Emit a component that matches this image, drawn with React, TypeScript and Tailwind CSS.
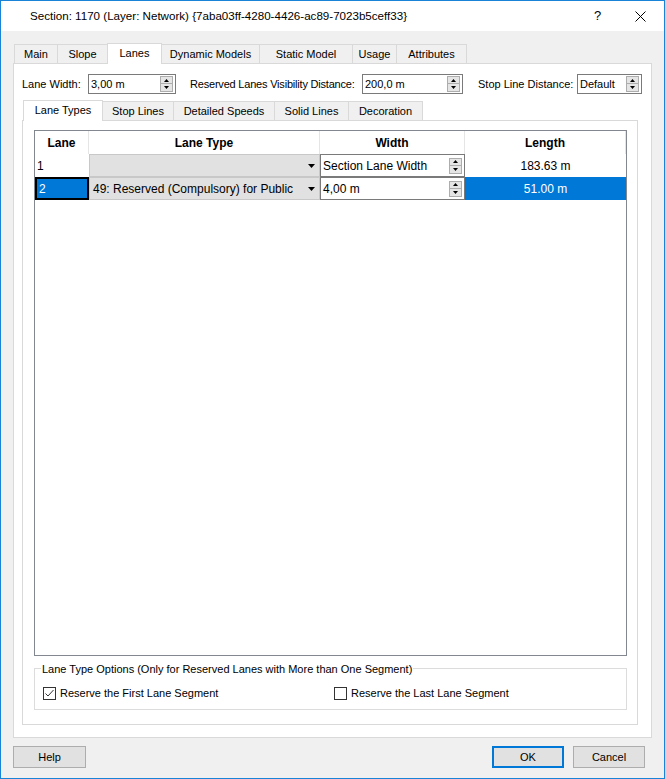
import React from "react";

const tabsOuter = [
  { label: "Main", w: "w-[44px]" },
  { label: "Slope", w: "w-[51px]" },
  { label: "Lanes", w: "w-[55px]", active: true },
  { label: "Dynamic Models", w: "w-[99px]" },
  { label: "Static Model", w: "w-[94px]" },
  { label: "Usage", w: "w-[45px]" },
  { label: "Attributes", w: "w-[71px]" },
];

const tabsInner = [
  { label: "Lane Types", w: "w-[80px]", active: true },
  { label: "Stop Lines", w: "w-[72px]" },
  { label: "Detailed Speeds", w: "w-[102px]" },
  { label: "Solid Lines", w: "w-[75px]" },
  { label: "Decoration", w: "w-[75px]" },
];

function Tri() {
  return (
    <svg width="7" height="4" viewBox="0 0 7 4">
      <path d="M0 0 L7 0 L3.5 4 Z" fill="#000" />
    </svg>
  );
}

function Spinner() {
  return (
    <div className="flex flex-col w-[13px] shrink-0">
      <div className="h-[8px] border border-[#adadad] bg-[#e5e5e5] flex items-center justify-center">
        <svg width="5" height="3" viewBox="0 0 5 3"><path d="M0 3 L2.5 0 L5 3 Z" fill="#000" /></svg>
      </div>
      <div className="h-[8px] border border-t-0 border-[#adadad] bg-[#e5e5e5] flex items-center justify-center">
        <svg width="5" height="3" viewBox="0 0 5 3"><path d="M0 0 L5 0 L2.5 3 Z" fill="#000" /></svg>
      </div>
    </div>
  );
}

function SpinBox({ value, w }: { value: string; w: string }) {
  return (
    <div className={`${w} h-[20px] border border-[#7a7a7a] bg-white flex items-center pl-[2px] pr-[2px]`}>
      <span className="flex-1 leading-none">{value}</span>
      <Spinner />
    </div>
  );
}

function Tab({ label, w, active }: { label: string; w: string; active?: boolean }) {
  return (
    <div
      className={`${w} -ml-px first:ml-0 flex items-center justify-center border border-b-0 border-[#d9d9d9] ${
        active ? "h-[21px] bg-white relative z-10 -mb-px pb-[2px]" : "h-[19px] bg-[#f0f0f0]"
      }`}
    >
      {label}
    </div>
  );
}

function Checkbox({ checked }: { checked?: boolean }) {
  return (
    <div className="w-[13px] h-[13px] border border-[#333] bg-white flex items-center justify-center">
      {checked && (
        <svg width="11" height="11" viewBox="0 0 11 11">
          <path d="M1.5 5.5 L4 8 L9.5 2" stroke="#333" strokeWidth="1" fill="none" />
        </svg>
      )}
    </div>
  );
}

export default function App() {
  return (
    <div className="w-[665px] h-[779px] border border-[#1883d7] bg-[#f0f0f0] flex flex-col text-[11px] text-black font-['Liberation_Sans',Arial,sans-serif]">
      {/* Title bar */}
      <div className="h-[30px] bg-white flex items-center pl-[29px] shrink-0">
        <span className="text-[11.6px] flex-1">Section: 1170 (Layer: Network) {"{"}7aba03ff-4280-4426-ac89-7023b5ceff33{"}"}</span>
        <span className="text-[13px] w-[20px] mr-[21px]">?</span>
        <svg width="11" height="11" viewBox="0 0 11 11" className="mr-[18px]">
          <path d="M0.5 0.5 L10.5 10.5 M10.5 0.5 L0.5 10.5" stroke="#000" strokeWidth="1" />
        </svg>
      </div>

      {/* Outer tabs */}
      <div className="pl-[12px] pt-[11px] flex flex-col">
        <div className="flex items-end pl-[1px] h-[21px]">
          {tabsOuter.map((t) => (
            <Tab key={t.label} {...t} />
          ))}
        </div>
        <div className="w-[639px] h-[675px] border border-[#d9d9d9] bg-white flex flex-col pt-[10px] pl-[8px]">
          <div className="flex items-center h-[20px]">
            <span className="w-[66px]">Lane Width:</span>
            <SpinBox value="3,00 m" w="w-[88px]" />
            <span className="ml-[14px] w-[172px] whitespace-nowrap tracking-[-0.2px]">Reserved Lanes Visibility Distance:</span>
            <SpinBox value="200,0 m" w="w-[101px]" />
            <span className="ml-[15px] w-[99px]">Stop Line Distance:</span>
            <SpinBox value="Default" w="w-[65px]" />
          </div>

          <div className="flex items-end h-[21px] mt-[5px] pl-[1px]">
            {tabsInner.map((t) => (
              <Tab key={t.label} {...t} />
            ))}
          </div>
          <div className="w-[616px] h-[605px] border border-[#d9d9d9] bg-white pt-[9px] pl-[11px] flex flex-col">
            {/* Grid */}
            <div className="w-[593px] h-[526px] border border-[#828790] bg-white flex flex-col">
              <div className="flex h-[23px] font-bold text-[12px]">
                <div className="w-[54px] flex items-center justify-center border-r border-[#e5e5e5]">Lane</div>
                <div className="w-[231px] flex items-center justify-center border-r border-[#e5e5e5]">Lane Type</div>
                <div className="w-[145px] flex items-center justify-center border-r border-[#e5e5e5]">Width</div>
                <div className="flex-1 flex items-center justify-center border-r border-[#e5e5e5]">Length</div>
              </div>
              <div className="flex h-[23px] text-[12px]">
                <div className="w-[54px] flex items-center pl-[2px]">1</div>
                <div className="w-[231px] bg-[#e1e1e1] border border-[#c8c8c8] flex items-center justify-end pr-[4px]">
                  <Tri />
                </div>
                <div className="w-[145px] border border-[#7a7a7a] flex items-center pl-[2px] pr-[2px]">
                  <span className="flex-1">Section Lane Width</span>
                  <Spinner />
                </div>
                <div className="flex-1 flex items-center justify-center">183.63 m</div>
              </div>
              <div className="flex h-[23px] text-[12px]">
                <div className="w-[54px] flex items-center pl-[2px] bg-[#0078d7] text-white border-2 border-black">2</div>
                <div className="w-[231px] bg-[#e1e1e1] border border-[#c8c8c8] flex items-center pl-[3px] pr-[4px]">
                  <span className="flex-1">49: Reserved (Compulsory) for Public</span>
                  <Tri />
                </div>
                <div className="w-[145px] border border-[#7a7a7a] flex items-center pl-[2px] pr-[2px]">
                  <span className="flex-1">4,00 m</span>
                  <Spinner />
                </div>
                <div className="flex-1 flex items-center justify-center bg-[#0078d7] text-white">51.00 m</div>
              </div>
            </div>

            {/* Group box */}
            <div className="w-[593px] h-[42px] mt-[12px] border border-[#dcdcdc] relative flex items-center">
              <span className="absolute left-[6px] -top-[8px] bg-white px-[1px]">
                Lane Type Options (Only for Reserved Lanes with More than One Segment)
              </span>
              <div className="flex items-center pl-[8px] pt-[8px] w-[299px]">
                <Checkbox checked />
                <span className="ml-[4px]">Reserve the First Lane Segment</span>
              </div>
              <div className="flex items-center pt-[8px]">
                <Checkbox />
                <span className="ml-[4px]">Reserve the Last Lane Segment</span>
              </div>
            </div>
          </div>
        </div>
      </div>

      {/* Buttons */}
      <div className="flex items-center pl-[12px] pr-[19px] mt-[8px]">
        <button className="w-[73px] h-[22px] border border-[#adadad] bg-[#e1e1e1]">Help</button>
        <div className="flex-1" />
        <button className="w-[72px] h-[22px] border-2 border-[#0078d7] bg-[#e1e1e1]">OK</button>
        <button className="w-[72px] h-[22px] ml-[9px] border border-[#adadad] bg-[#e1e1e1]">Cancel</button>
      </div>
    </div>
  );
}
